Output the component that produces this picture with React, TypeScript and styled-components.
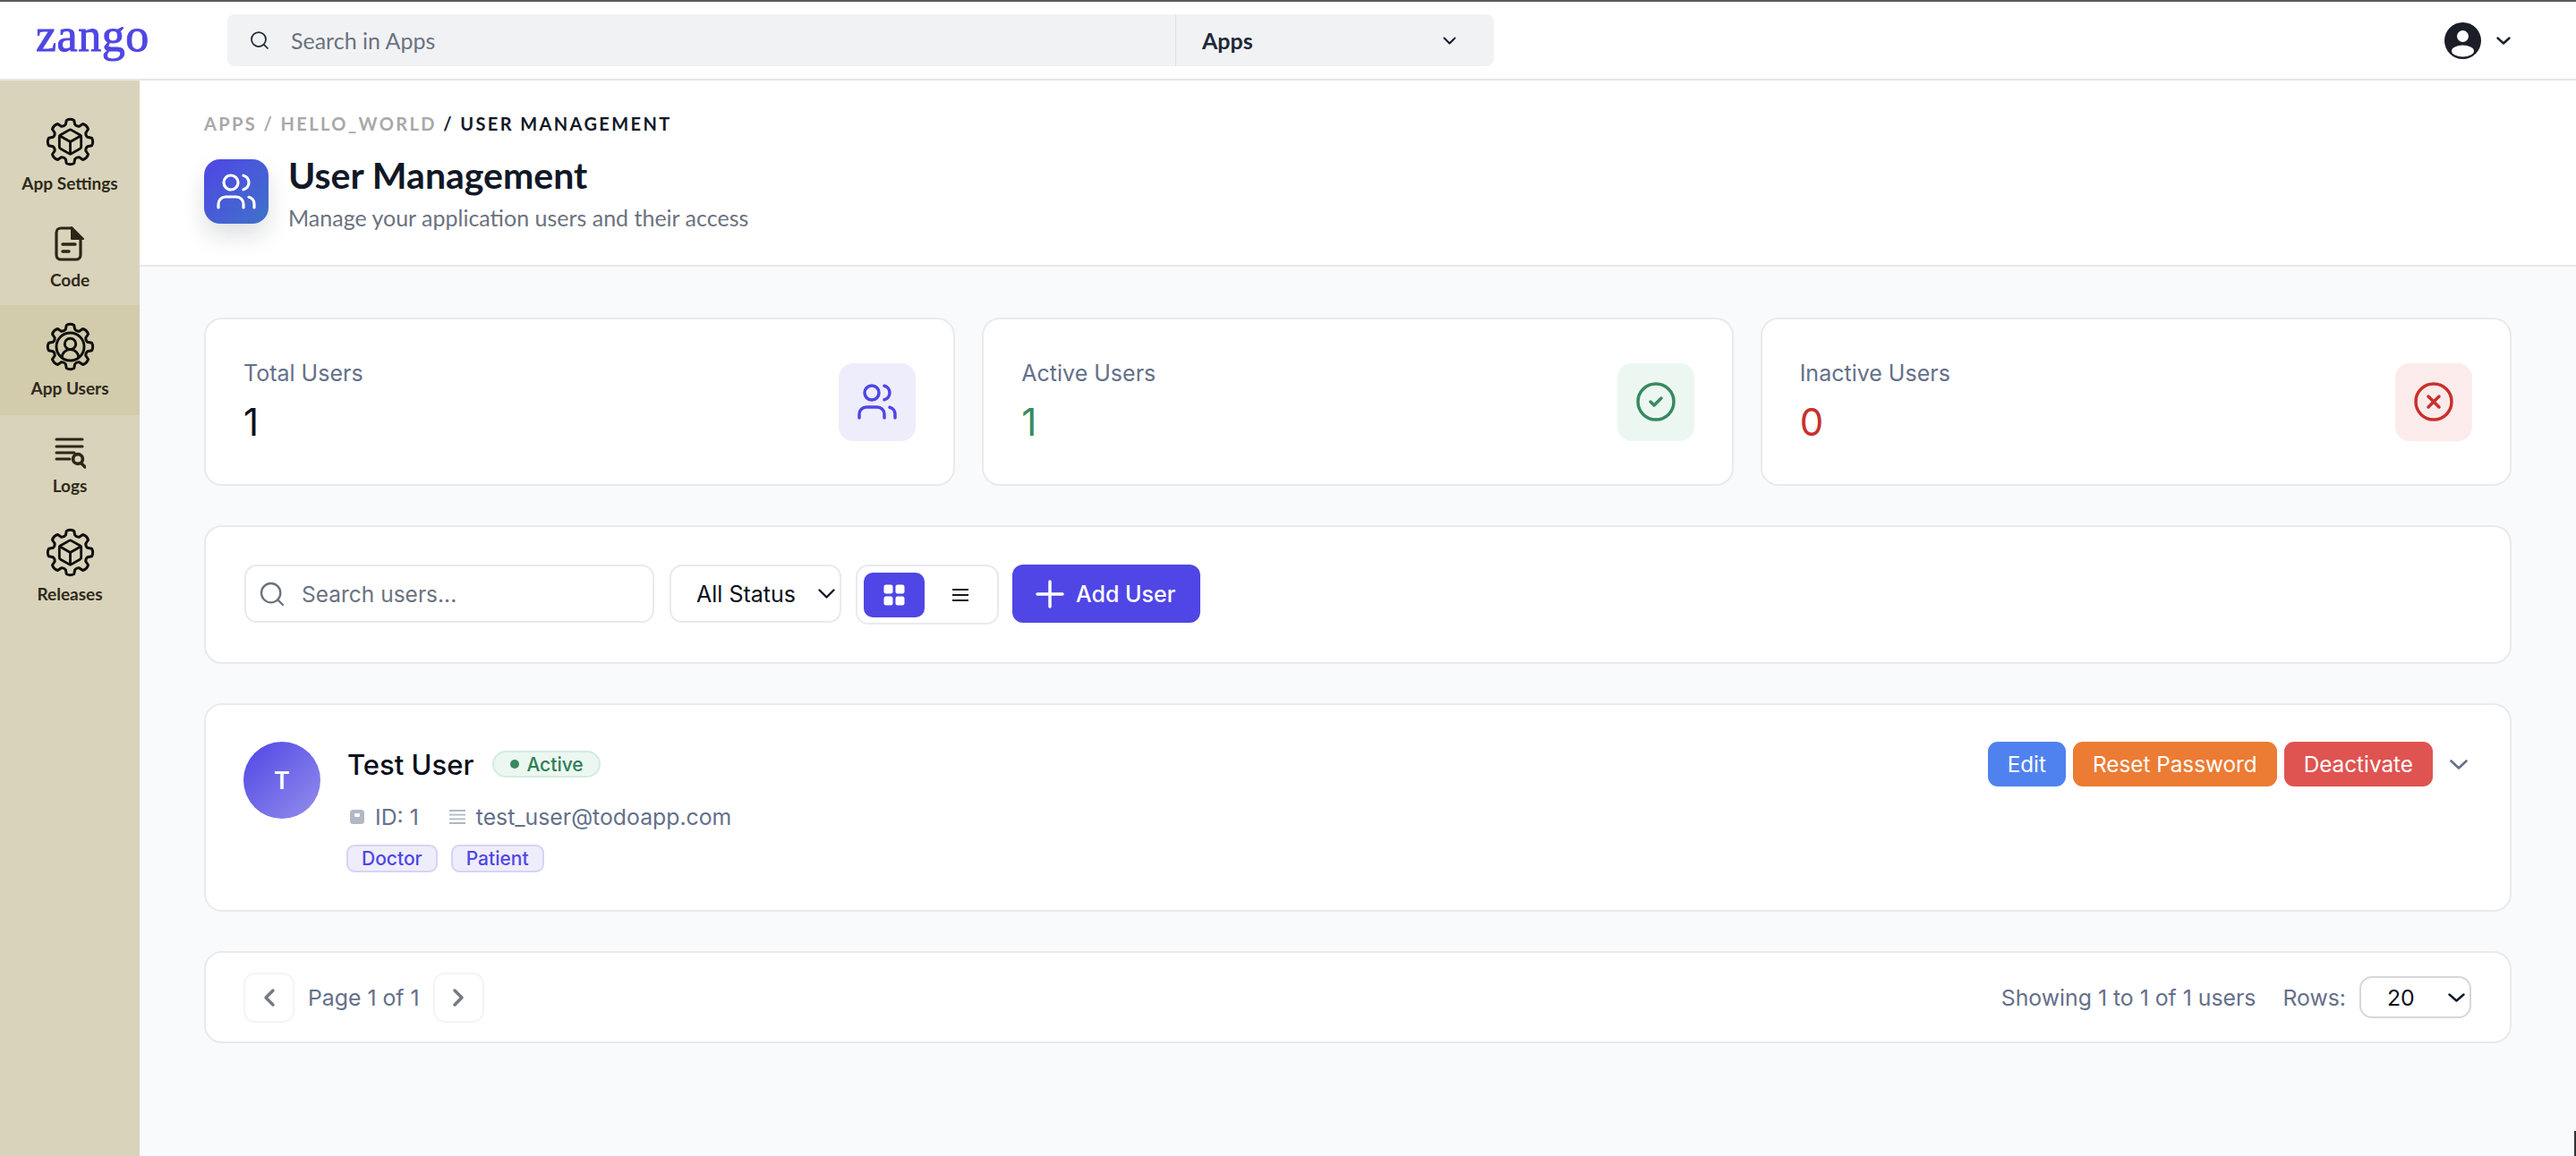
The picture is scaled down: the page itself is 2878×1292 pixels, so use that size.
import styled, { createGlobalStyle } from "styled-components"
import { CircleCheck, CircleX, Plus, Search, Users } from "lucide-react"

const GlobalStyle = createGlobalStyle`
  html, body {
    margin: 0;
    padding: 0;
    background: #fff;
    font-family: "Inter", "Liberation Sans", sans-serif;
    overflow: hidden;
  }
  * {
    box-sizing: border-box;
  }
`

const Chevron = ({ w, h, sw = 2.5, color = "#111827" }: { w: number; h: number; sw?: number; color?: string }) => (
  <svg width={w} height={h} viewBox={`0 0 ${w} ${h}`} fill="none" stroke={color} strokeWidth={sw} strokeLinecap="round" strokeLinejoin="round">
    <path d={`M1.5 1.5L${w / 2} ${h - 1.5}L${w - 1.5} 1.5`} />
  </svg>
)

// gear outline used by the sidebar icons, 8 rounded teeth around 0,0
const gearPath = (() => {
  const pt = (r: number, deg: number) => {
    const a = (deg * Math.PI) / 180
    return `${(28.5 + r * Math.cos(a)).toFixed(2)} ${(28.5 + r * Math.sin(a)).toFixed(2)}`
  }
  let d = ""
  for (let i = 0; i < 8; i++) {
    const a = i * 45 - 90
    d += i === 0 ? `M${pt(20, a - 15)}` : ""
    d += `L${pt(24.4, a - 10)}Q${pt(26.4, a)} ${pt(24.4, a + 10)}L${pt(20, a + 15)}Q${pt(18.4, a + 22.5)} ${pt(20, a + 30)}`
  }
  return d + "Z"
})()

const GearIcon = ({ children }: { children: React.ReactNode }) => (
  <svg width="57" height="57" viewBox="0 0 57 57" fill="none" stroke="#0f0f0c" strokeWidth="3" strokeLinecap="round" strokeLinejoin="round">
    <path d={gearPath} />
    {children}
  </svg>
)

const CubeGlyph = () => (
  <g transform="translate(12.3 12.3) scale(1.35)" strokeWidth="2.1">
    <path d="M21 8a2 2 0 0 0-1-1.73l-7-4a2 2 0 0 0-2 0l-7 4A2 2 0 0 0 3 8v8a2 2 0 0 0 1 1.73l7 4a2 2 0 0 0 2 0l7-4A2 2 0 0 0 21 16Z" />
    <path d="m3.3 7 8.7 5 8.7-5" />
    <path d="M12 22V12" />
  </g>
)

const UserGlyph = () => (
  <g transform="translate(9.9 9.9) scale(1.55)" strokeWidth="1.9">
    <circle cx="12" cy="12" r="10" />
    <circle cx="12" cy="10" r="4" />
    <path d="M18 20a6 6 0 0 0-12 0" />
  </g>
)

const CodeIcon = () => (
  <svg width="36" height="42" viewBox="0 0 36 42" fill="none" stroke="#2b2716" strokeWidth="3.2" strokeLinecap="round" strokeLinejoin="round">
    <path d="M20 2H8a5 5 0 0 0-5 5v25a5 5 0 0 0 5 5h17a5 5 0 0 0 5-5V15" />
    <path d="M20 1L33 14H20Z" fill="#2b2716" strokeWidth="2" />
    <path d="M10 20H24M10 28H17" strokeWidth="3.4" />
  </svg>
)

const LogsIcon = () => (
  <svg width="36" height="43" viewBox="0 0 36 43" fill="none" stroke="#2b2716" strokeWidth="3" strokeLinecap="round" strokeLinejoin="round">
    <path d="M3 9H32M3 17H32M3 24H23" />
    <path d="M3 31H18" />
    <circle cx="27" cy="31" r="5.4" strokeWidth="3.6" />
    <path d="M31 36L35 40" strokeWidth="3.4" />
  </svg>
)

const GridIcon = () => (
  <svg width="24" height="24" viewBox="0 0 24 24" fill="#fff">
    <rect x="0.5" y="0.5" width="10" height="10" rx="2.2" />
    <rect x="13.5" y="0.5" width="10" height="10" rx="2.2" />
    <rect x="0.5" y="13.5" width="10" height="10" rx="2.2" />
    <rect x="13.5" y="13.5" width="10" height="10" rx="2.2" />
  </svg>
)

const ListIcon = () => (
  <svg width="18" height="16" viewBox="0 0 18 16" fill="none" stroke="#111827" strokeWidth="2">
    <path d="M0 2H18M0 8H18M0 14H18" />
  </svg>
)

const AccountIcon = () => (
  <svg width="41" height="41" viewBox="0 0 41 41">
    <circle cx="20.5" cy="20.5" r="20.5" fill="#1b1e27" />
    <circle cx="20.5" cy="15.5" r="6.5" fill="#fff" />
    <ellipse cx="20.5" cy="32" rx="12.5" ry="6.5" fill="#fff" />
  </svg>
)

const IdIcon = () => (
  <svg width="16" height="16" viewBox="0 0 16 16">
    <rect width="16" height="16" rx="3.5" fill="#b1b8c4" />
    <rect x="5" y="4" width="6" height="4" rx="1" fill="#fff" />
  </svg>
)

const MailLinesIcon = () => (
  <svg width="18" height="16" viewBox="0 0 18 16" fill="none" stroke="#b1b8c4" strokeWidth="1.8">
    <path d="M0 1H18M0 5.7H18M0 10.4H18M0 15H18" />
  </svg>
)

const Page = styled.div`
  display: flex;
  flex-direction: column;
  height: 1292px;
  border-top: 2px solid #5a5a5a;
`

const CornerMark = styled.div`
  position: fixed;
  right: 0;
  bottom: 0;
  width: 2px;
  height: 28px;
  background: #333;
`

const TopBar = styled.header`
  display: flex;
  align-items: flex-start;
  height: 88px;
  flex-shrink: 0;
  padding: 14px 73px 0 40px;
  border-bottom: 2px solid #e6e6e6;
  background: #fff;
`

const Logo = styled.div`
  width: 214px;
  margin-top: 1px;
  font-family: "Liberation Serif", serif;
  font-size: 52px;
  line-height: 46px;
  letter-spacing: 0.5px;
  color: #4f46e5;
  -webkit-text-stroke: 1px #4f46e5;
`

const GlobalSearch = styled.div`
  display: flex;
  width: 1415px;
  height: 58px;
  border-radius: 8px;
  background: #f1f2f4;
  font-family: "Lato", sans-serif;
  font-size: 25px;
`

const GlobalSearchField = styled.div`
  display: flex;
  align-items: center;
  gap: 23px;
  width: 1059px;
  padding-left: 24px;
  color: #6b7280;
`

const ScopeSelect = styled.div`
  display: flex;
  flex: 1;
  align-items: center;
  justify-content: space-between;
  padding: 0 42px 0 29px;
  border-left: 1px solid #dfe1e5;
  font-weight: 700;
  color: #1f2937;
`

const AccountMenu = styled.div`
  display: flex;
  align-items: center;
  gap: 17px;
  margin: 9px 0 0 auto;
`

const Body = styled.div`
  display: flex;
  flex: 1;
  min-height: 0;
`

const Sidebar = styled.nav`
  display: flex;
  flex-direction: column;
  flex-shrink: 0;
  width: 156px;
  padding-top: 22px;
  background: #d9d3bb;
`

const NavItem = styled.div<{ $active?: boolean; $compact?: boolean }>`
  display: flex;
  flex-direction: column;
  align-items: center;
  padding: 18px 0 ${({ $compact }) => ($compact ? "16px" : "18px")};
  gap: 6px;
  background: ${({ $active }) => ($active ? "#d2cbac" : "transparent")};
`

const NavLabel = styled.span`
  font-family: "Lato", sans-serif;
  font-weight: 700;
  font-size: 19px;
  line-height: 24px;
  color: #2e2a1a;
`

const Main = styled.main`
  display: flex;
  flex: 1;
  flex-direction: column;
  min-width: 0;
  background: #f9fafb;
`

const PageHeader = styled.div`
  height: 208px;
  flex-shrink: 0;
  padding: 36px 72px 0;
  border-bottom: 2px solid #e8eaee;
  background: #fff;
`

const Breadcrumb = styled.div`
  font-family: "Lato", sans-serif;
  font-size: 20px;
  line-height: 24px;
  font-weight: 700;
  letter-spacing: 2.4px;
  color: #111827;

  span {
    color: #a8a8a8;
  }
`

const TitleRow = styled.div`
  display: flex;
  gap: 22px;
  margin-top: 28px;
`

const TitleIcon = styled.div`
  display: flex;
  align-items: center;
  justify-content: center;
  width: 72px;
  height: 72px;
  border-radius: 18px;
  background: linear-gradient(135deg, #4f46e5, #3f72c9);
  box-shadow: 0 14px 26px rgba(15, 23, 42, 0.13);
  color: #fff;
`

const TitleText = styled.div`
  margin-top: -2px;
`

const Title = styled.h1`
  margin: 0;
  font-family: "Lato", sans-serif;
  font-weight: 700;
  font-size: 41px;
  line-height: 40px;
  color: #111827;
`

const Subtitle = styled.p`
  margin: 10px 0 0;
  font-family: "Lato", sans-serif;
  font-size: 25px;
  line-height: 34px;
  color: #6b7280;
`

const Content = styled.div`
  display: flex;
  flex-direction: column;
  gap: 44px;
  padding: 57px 72px 0;
`

const Card = styled.section`
  border: 2px solid #e8eaee;
  border-radius: 20px;
  background: #fff;
`

const StatGrid = styled.div`
  display: grid;
  grid-template-columns: repeat(3, 1fr);
  gap: 30px;
`

const StatCard = styled(Card)`
  display: flex;
  align-items: center;
  justify-content: space-between;
  height: 188px;
  padding: 0 42px;
`

const StatLabel = styled.div`
  font-size: 25px;
  line-height: 32px;
  color: #64708a;
`

const StatValue = styled.div<{ $color: string }>`
  margin-top: 14px;
  font-size: 42px;
  line-height: 50px;
  font-weight: 400;
  color: ${({ $color }) => $color};
`

const StatIcon = styled.div<{ $bg: string; $color: string }>`
  display: flex;
  align-items: center;
  justify-content: center;
  width: 86px;
  height: 87px;
  border-radius: 16px;
  background: ${({ $bg }) => $bg};
  color: ${({ $color }) => $color};
`

const Toolbar = styled(Card)`
  display: flex;
  align-items: flex-start;
  height: 155px;
  padding: 42px 43px;
`

const SearchBox = styled.div`
  display: flex;
  align-items: center;
  gap: 17px;
  width: 458px;
  height: 65px;
  padding-left: 13px;
  border: 2px solid #e8eaee;
  border-radius: 14px;
  color: #6b7280;
`

const SearchInput = styled.input`
  flex: 1;
  min-width: 0;
  border: 0;
  outline: 0;
  padding: 0;
  background: transparent;
  font-family: inherit;
  font-size: 24.5px;

  &::placeholder {
    color: #6b7280;
    opacity: 1;
  }
`

const StatusSelect = styled.div`
  display: flex;
  align-items: center;
  justify-content: space-between;
  width: 192px;
  height: 65px;
  margin: 0 16px 0 17px;
  padding: 0 5px 0 28px;
  border: 2px solid #e8eaee;
  border-radius: 14px;
  font-size: 25px;
  color: #0b0f1a;
`

const ViewToggle = styled.div`
  display: flex;
  width: 160px;
  height: 67px;
  padding: 7px;
  border: 2px solid #e8eaee;
  border-radius: 14px;
`

const ViewButton = styled.div<{ $active?: boolean }>`
  display: flex;
  align-items: center;
  justify-content: center;
  width: 68px;
  height: 50px;
  margin-left: ${({ $active }) => ($active ? "0" : "auto")};
  border-radius: 10px;
  background: ${({ $active }) => ($active ? "#4f46e5" : "transparent")};
`

const AddButton = styled.button`
  display: flex;
  align-items: center;
  gap: 5px;
  width: 210px;
  height: 65px;
  margin-left: 15px;
  padding: 0 0 0 18px;
  border: 0;
  border-radius: 12px;
  background: #4f46e5;
  font-family: inherit;
  font-size: 25px;
  font-weight: 500;
  color: #fff;
`

const UserCard = styled(Card)`
  display: flex;
  height: 233px;
  padding: 41px 42px;
`

const Avatar = styled.div`
  display: flex;
  align-items: center;
  justify-content: center;
  flex-shrink: 0;
  width: 86px;
  height: 86px;
  border-radius: 50%;
  background: linear-gradient(135deg, #4f46e5, #948eec);
  font-size: 27px;
  font-weight: 600;
  color: #fff;
`

const UserInfo = styled.div`
  flex: 1;
  margin-left: 29px;
`

const NameRow = styled.div`
  display: flex;
  align-items: center;
  height: 50px;
`

const UserName = styled.span`
  margin-left: 1px;
  font-size: 31px;
  font-weight: 500;
  color: #0b0f1a;
`

const StatusBadge = styled.span`
  display: flex;
  align-items: center;
  gap: 8px;
  height: 30px;
  margin-left: 21px;
  padding: 0 17px 0 18px;
  border: 2px solid #d3ecdf;
  border-radius: 15px;
  background: #ecf7f1;
  font-size: 21px;
  font-weight: 500;
  color: #2f7d55;

  &::before {
    content: "";
    width: 10px;
    height: 10px;
    border-radius: 50%;
    background: #38895f;
  }
`

const MetaRow = styled.div`
  display: flex;
  align-items: center;
  height: 40px;
  margin: 14px 0 0 4px;
  font-size: 24.8px;
  color: #64708a;
`

const MetaItem = styled.span`
  display: flex;
  align-items: center;
  gap: 12px;
  margin-right: 34px;
`

const TagRow = styled.div`
  display: flex;
  gap: 15px;
  margin-top: 11px;
`

const Tag = styled.span`
  display: flex;
  align-items: center;
  height: 31px;
  padding: 0 15px;
  border: 2px solid #d6d3f6;
  border-radius: 9px;
  background: #eeedfb;
  font-size: 21px;
  font-weight: 500;
  color: #4f46e5;
`

const Actions = styled.div`
  display: flex;
  align-items: flex-start;
  gap: 8px;
`

const ActionButton = styled.button<{ $bg: string }>`
  height: 50px;
  padding: 0 22px;
  border: 0;
  border-radius: 11px;
  background: ${({ $bg }) => $bg};
  font-family: inherit;
  font-size: 24.3px;
  color: #fff;
`

const ExpandToggle = styled.div`
  display: flex;
  align-items: center;
  height: 50px;
  margin: 0 5px 0 11px;
`

const Pagination = styled(Card)`
  display: flex;
  align-items: center;
  justify-content: space-between;
  height: 103px;
  padding: 0 43px 0 42px;
`

const Pager = styled.div`
  display: flex;
  align-items: center;
  gap: 15px;
  font-size: 24.8px;
  color: #64708a;
`

const PageButton = styled.div`
  display: flex;
  align-items: center;
  justify-content: center;
  width: 57px;
  height: 56px;
  border: 2px solid #f3f4f6;
  border-radius: 13px;
  color: #757982;
`

const RowsInfo = styled.div`
  display: flex;
  align-items: center;
  font-size: 24.8px;
  color: #64708a;
`

const RowsLabel = styled.span`
  margin: 0 15px 0 30px;
`

const RowsSelect = styled.div`
  display: flex;
  align-items: center;
  justify-content: space-between;
  width: 125px;
  height: 47px;
  padding: 0 5px 0 29px;
  border: 2px solid #d5d7dc;
  border-radius: 14px;
  color: #0b0f1a;
`

const ArrowLeft = () => (
  <svg width="14" height="22" viewBox="0 0 14 22" fill="none" stroke="currentColor" strokeWidth="3.4" strokeLinecap="round" strokeLinejoin="round">
    <path d="M11 3L3 11L11 19" />
  </svg>
)

const ArrowRight = () => (
  <svg width="14" height="22" viewBox="0 0 14 22" fill="none" stroke="currentColor" strokeWidth="3.4" strokeLinecap="round" strokeLinejoin="round">
    <path d="M3 3L11 11L3 19" />
  </svg>
)

export default function App() {
  return (
    <Page>
      <GlobalStyle />
      <TopBar>
        <Logo>zango</Logo>
        <GlobalSearch>
          <GlobalSearchField>
            <Search size={24} strokeWidth={1.75} color="#1f2937" />
            Search in Apps
          </GlobalSearchField>
          <ScopeSelect>
            Apps
            <Chevron w={15} h={9} sw={2} />
          </ScopeSelect>
        </GlobalSearch>
        <AccountMenu>
          <AccountIcon />
          <Chevron w={16} h={9} sw={2.4} color="#1b1e27" />
        </AccountMenu>
      </TopBar>
      <Body>
        <Sidebar>
          <NavItem>
            <GearIcon>
              <CubeGlyph />
            </GearIcon>
            <NavLabel>App Settings</NavLabel>
          </NavItem>
          <NavItem $compact>
            <CodeIcon />
            <NavLabel>Code</NavLabel>
          </NavItem>
          <NavItem $active>
            <GearIcon>
              <UserGlyph />
            </GearIcon>
            <NavLabel>App Users</NavLabel>
          </NavItem>
          <NavItem $compact>
            <LogsIcon />
            <NavLabel>Logs</NavLabel>
          </NavItem>
          <NavItem>
            <GearIcon>
              <CubeGlyph />
            </GearIcon>
            <NavLabel>Releases</NavLabel>
          </NavItem>
        </Sidebar>
        <Main>
          <PageHeader>
            <Breadcrumb>
              <span>APPS / HELLO_WORLD</span> / USER MANAGEMENT
            </Breadcrumb>
            <TitleRow>
              <TitleIcon>
                <Users size={48} strokeWidth={1.6} />
              </TitleIcon>
              <TitleText>
                <Title>User Management</Title>
                <Subtitle>Manage your application users and their access</Subtitle>
              </TitleText>
            </TitleRow>
          </PageHeader>
          <Content>
            <StatGrid>
              <StatCard>
                <div>
                  <StatLabel>Total Users</StatLabel>
                  <StatValue $color="#0b0f1a">1</StatValue>
                </div>
                <StatIcon $bg="#eeedfb" $color="#4f46e5">
                  <Users size={48} strokeWidth={1.75} />
                </StatIcon>
              </StatCard>
              <StatCard>
                <div>
                  <StatLabel>Active Users</StatLabel>
                  <StatValue $color="#38895f">1</StatValue>
                </div>
                <StatIcon $bg="#ecf7f1" $color="#38895f">
                  <CircleCheck size={48} strokeWidth={1.75} />
                </StatIcon>
              </StatCard>
              <StatCard>
                <div>
                  <StatLabel>Inactive Users</StatLabel>
                  <StatValue $color="#c9302c">0</StatValue>
                </div>
                <StatIcon $bg="#fbeceb" $color="#c9302c">
                  <CircleX size={48} strokeWidth={1.75} />
                </StatIcon>
              </StatCard>
            </StatGrid>
            <Toolbar>
              <SearchBox>
                <Search size={32} strokeWidth={1.75} color="#6b7280" />
                <SearchInput placeholder="Search users..." />
              </SearchBox>
              <StatusSelect>
                All Status
                <Chevron w={19} h={11} sw={2.4} />
              </StatusSelect>
              <ViewToggle>
                <ViewButton $active>
                  <GridIcon />
                </ViewButton>
                <ViewButton>
                  <ListIcon />
                </ViewButton>
              </ViewToggle>
              <AddButton>
                <Plus size={48} strokeWidth={1.75} />
                Add User
              </AddButton>
            </Toolbar>
            <UserCard>
              <Avatar>T</Avatar>
              <UserInfo>
                <NameRow>
                  <UserName>Test User</UserName>
                  <StatusBadge>Active</StatusBadge>
                </NameRow>
                <MetaRow>
                  <MetaItem>
                    <IdIcon />
                    ID: 1
                  </MetaItem>
                  <MetaItem>
                    <MailLinesIcon />
                    test_user@todoapp.com
                  </MetaItem>
                </MetaRow>
                <TagRow>
                  <Tag>Doctor</Tag>
                  <Tag>Patient</Tag>
                </TagRow>
              </UserInfo>
              <Actions>
                <ActionButton $bg="#4f82ef">Edit</ActionButton>
                <ActionButton $bg="#ec7b33">Reset Password</ActionButton>
                <ActionButton $bg="#df5350">Deactivate</ActionButton>
                <ExpandToggle>
                  <Chevron w={20} h={11} sw={2.6} color="#64708a" />
                </ExpandToggle>
              </Actions>
            </UserCard>
            <Pagination>
              <Pager>
                <PageButton>
                  <ArrowLeft />
                </PageButton>
                Page 1 of 1
                <PageButton>
                  <ArrowRight />
                </PageButton>
              </Pager>
              <RowsInfo>
                Showing 1 to 1 of 1 users
                <RowsLabel>Rows:</RowsLabel>
                <RowsSelect>
                  20
                  <Chevron w={19} h={10} sw={2.4} />
                </RowsSelect>
              </RowsInfo>
            </Pagination>
          </Content>
        </Main>
      </Body>
      <CornerMark />
    </Page>
  )
}
